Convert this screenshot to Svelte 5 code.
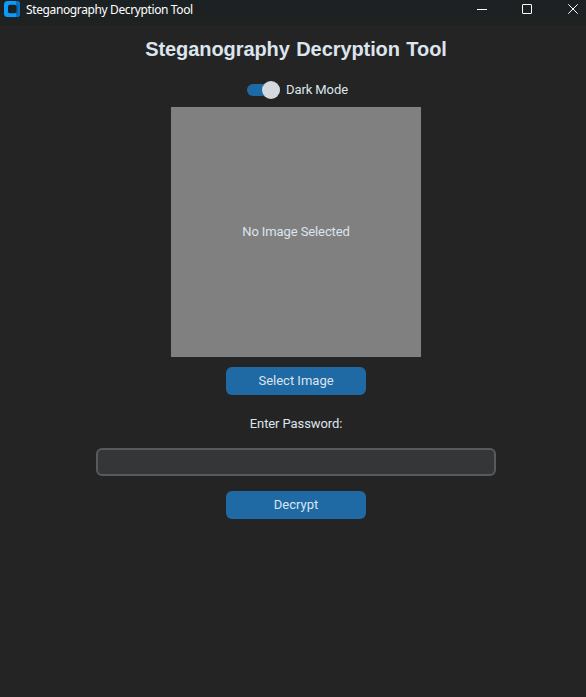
<script>
  let dark = $state(true);
  let password = $state('');
</script>

<div class="window">
  <header>
    <svg class="logo" width="16" height="16" viewBox="0 0 16 16">
      <rect width="16" height="16" rx="3.5" fill="#0a9bfb" />
      <path d="M12 0h.5A3.5 3.5 0 0 1 16 3.5v9a3.5 3.5 0 0 1-3.5 3.5H12z" fill="#0671c6" />
      <path d="M12 5l2-2v9l-2 1z" fill="#0560ac" />
      <rect x="4" y="3.8" width="8.4" height="8.4" rx="1.8" fill="#1b2023" />
    </svg>
    <span class="caption">Steganography Decryption Tool</span>
    <div class="controls">
      <svg width="10" height="10" viewBox="0 0 10 10"><path d="M0 5.5h10" /></svg>
      <svg width="10" height="10" viewBox="0 0 10 10"><rect x=".5" y=".5" width="9" height="9" rx=".5" /></svg>
      <svg class="close" width="10" height="10" viewBox="0 0 10 10"><path d="M.3.3l9.4 9.4M9.7.3L.3 9.7" /></svg>
    </div>
  </header>
  <main>
    <h1>Steganography Decryption Tool</h1>
    <button class="switch" class:off={!dark} onclick={() => (dark = !dark)}>
      <span class="track"><span class="knob"></span></span>
      <span class="label">Dark Mode</span>
    </button>
    <div class="preview"><span>No Image Selected</span></div>
    <button class="action">Select Image</button>
    <label for="password">Enter Password:</label>
    <input id="password" type="password" bind:value={password} />
    <button class="action">Decrypt</button>
  </main>
</div>

<style>
  :global(body) {
    margin: 0;
    background: #242424;
  }
  .window {
    width: 586px;
    height: 697px;
    box-sizing: border-box;
    overflow: hidden;
    background: #242424;
    color: #dce4ee;
    font: 13px/16px Roboto, sans-serif;
  }
  header {
    display: flex;
    align-items: flex-start;
    height: 25px;
    box-sizing: border-box;
    padding: 1px 8px 0 4px;
    background: linear-gradient(#1b2023, #1f2221);
    color: #fff;
  }
  .caption {
    margin-left: 6px;
    font: 12px/18px "Noto Sans", sans-serif;
    letter-spacing: -0.38px;
    white-space: nowrap;
  }
  .controls {
    display: flex;
    gap: 35px;
    margin: 3px 0 0 auto;
  }
  .controls svg {
    fill: none;
    stroke: #fff;
    stroke-width: 1;
  }
  .controls .close {
    margin-left: 1px;
  }
  main {
    display: flex;
    flex-direction: column;
    align-items: center;
    padding: 10px 0 0 6px;
  }
  h1 {
    margin: 0;
    font: bold 20px/28px "Liberation Sans", sans-serif;
    letter-spacing: -0.08px;
    word-spacing: 1px;
    white-space: nowrap;
  }
  button {
    border: 0;
    padding: 0;
    color: inherit;
    font: inherit;
  }
  .switch {
    display: flex;
    align-items: center;
    gap: 6px;
    height: 24px;
    margin-top: 15px;
    padding-left: 3px;
    background: none;
  }
  .label,
  .preview,
  label {
    letter-spacing: -0.1px;
  }
  .track {
    display: flex;
    align-items: center;
    justify-content: flex-end;
    width: 33px;
    height: 12px;
    border-radius: 6px;
    background: #1f6aa5;
  }
  .off .track {
    justify-content: flex-start;
    background: #4a4d50;
  }
  .knob {
    flex: none;
    width: 18px;
    height: 18px;
    border-radius: 50%;
    background: #d5d9de;
  }
  .preview {
    display: flex;
    align-items: center;
    justify-content: center;
    width: 250px;
    height: 250px;
    margin-top: 5px;
    background: #808080;
  }
  .action {
    width: 140px;
    height: 28px;
    margin-top: 10px;
    border-radius: 6px;
    background: #1f6aa5;
  }
  label {
    margin-top: 21px;
  }
  input {
    width: 400px;
    height: 28px;
    box-sizing: border-box;
    margin: 16px 0 5px;
    padding: 0 8px;
    border: 2px solid #565b5e;
    border-radius: 6px;
    outline: none;
    background: #343638;
    color: inherit;
    font: inherit;
  }
</style>
